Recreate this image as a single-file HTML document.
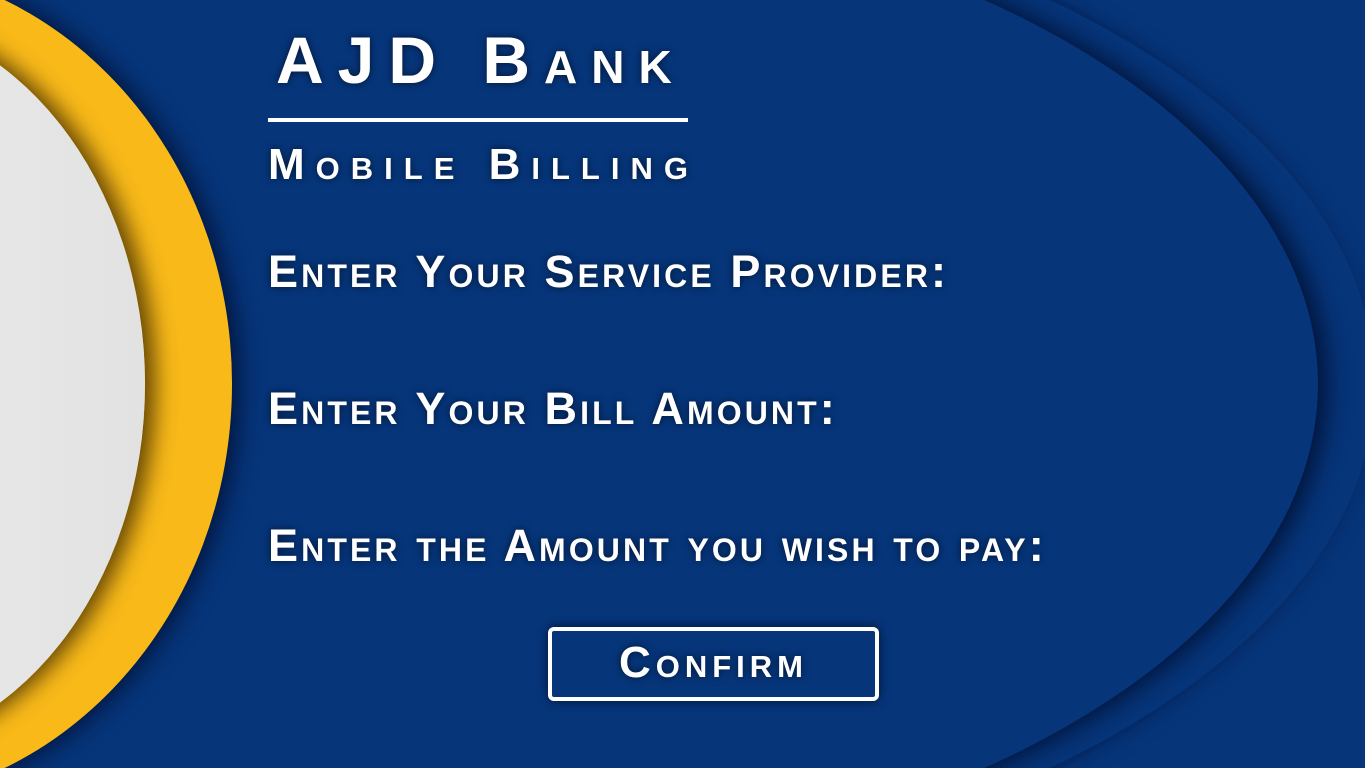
<!DOCTYPE html>
<html><head><style>
html,body{margin:0;padding:0;width:1365px;height:768px;overflow:hidden}
body{position:relative;background:#06357a;font-family:"Liberation Sans",sans-serif;color:#fff}
.e{position:absolute;border-radius:50%}
.t{position:absolute;font-weight:bold;font-variant:small-caps;white-space:nowrap;text-shadow:0 0 8px rgba(0,0,0,.6)}
</style></head><body>
<div class="e" style="left:-575px;top:-131px;width:1950px;height:1030px;background:#06357a;box-shadow:-10px 0 25px rgba(0,10,40,.7)"></div>
<div class="e" style="left:-518px;top:-114px;width:1836px;height:996px;background:#06357a;box-shadow:8px 0 25px rgba(0,10,40,.85)"></div>
<div class="e" style="left:-532px;top:-36px;width:764px;height:840px;background:#f8b919;box-shadow:6px 0 25px rgba(0,10,40,.8)"></div>
<div class="e" style="left:-445px;top:14px;width:590px;height:740px;background:linear-gradient(90deg,#f4f4f4,#e2e2e2);box-shadow:10px 0 22px rgba(60,40,0,.8)"></div>

<div class="t" style="left:276px;top:22px;font-size:66px;letter-spacing:14px">AJD Bank</div>
<div style="position:absolute;left:268px;top:118px;width:420px;height:4px;background:#fff"></div>
<div class="t" style="left:268px;top:140px;font-size:44px;letter-spacing:11px">Mobile Billing</div>
<div class="t" style="left:268px;top:246px;font-size:45px;letter-spacing:3.1px">Enter Your Service Provider:</div>
<div class="t" style="left:268px;top:383px;font-size:45px;letter-spacing:3.1px">Enter Your Bill Amount:</div>
<div class="t" style="left:268px;top:520px;font-size:45px;letter-spacing:3.1px">Enter the Amount you wish to pay:</div>
<div style="position:absolute;left:548px;top:627px;width:323px;height:66px;border:4px solid #fff;border-radius:6px;box-shadow:0 0 10px rgba(0,0,0,.6)"></div>
<div class="t" style="left:548px;top:638px;width:331px;text-align:center;font-size:44px;letter-spacing:5px">Confirm</div>
</body></html>
